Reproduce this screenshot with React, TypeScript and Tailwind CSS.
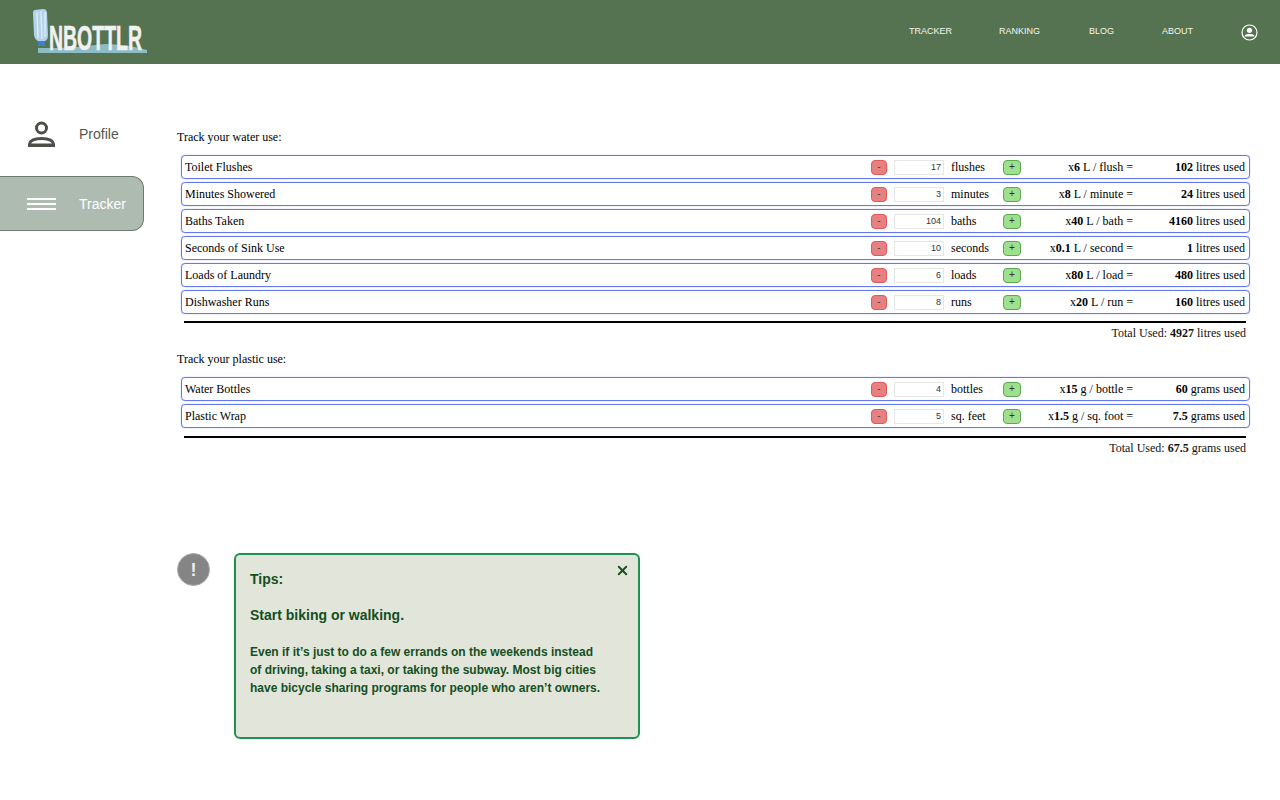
import { X } from "lucide-react"

interface TrackRow {
  label: string
  value: string
  unit: string
  rate: string
  rateUnit: string
  amount: string
  suffix: string
}

const waterRows: TrackRow[] = [
  { label: "Toilet Flushes", value: "17", unit: "flushes", rate: "6", rateUnit: " L / flush =", amount: "102", suffix: " litres used" },
  { label: "Minutes Showered", value: "3", unit: "minutes", rate: "8", rateUnit: " L / minute =", amount: "24", suffix: " litres used" },
  { label: "Baths Taken", value: "104", unit: "baths", rate: "40", rateUnit: " L / bath =", amount: "4160", suffix: " litres used" },
  { label: "Seconds of Sink Use", value: "10", unit: "seconds", rate: "0.1", rateUnit: " L / second =", amount: "1", suffix: " litres used" },
  { label: "Loads of Laundry", value: "6", unit: "loads", rate: "80", rateUnit: " L / load =", amount: "480", suffix: " litres used" },
  { label: "Dishwasher Runs", value: "8", unit: "runs", rate: "20", rateUnit: " L / run =", amount: "160", suffix: " litres used" },
]

const plasticRows: TrackRow[] = [
  { label: "Water Bottles", value: "4", unit: "bottles", rate: "15", rateUnit: " g / bottle =", amount: "60", suffix: " grams used" },
  { label: "Plastic Wrap", value: "5", unit: "sq. feet", rate: "1.5", rateUnit: " g / sq. foot =", amount: "7.5", suffix: " grams used" },
]

function Logo() {
  return (
    <svg width="125" height="50" viewBox="0 0 125 50" className="block overflow-visible">
      <path d="M11 41 L33 41 Q55 40 78 37 Q100 37 120 43 L120 46 L11 46 Z" fill="#8dbcc4" />
      <path d="M8 3 Q6 3 6 6 L7 28 Q8 33 11 34 L18 34 Q21 33 21 28 L20 6 Q20 2 16 2 Z" fill="#b4d2ea" />
      <path d="M10 5 L11 31 M14 4 L15 32 M18 5 L18 30" stroke="#dcebf6" strokeWidth="1.5" fill="none" />
      <rect x="11" y="34" width="7" height="5" fill="#3f7fc4" />
      <text
        x="22"
        y="43"
        textLength="93"
        lengthAdjust="spacingAndGlyphs"
        fontFamily="'Liberation Sans', sans-serif"
        fontWeight="700"
        fontSize="35"
        fill="#f0f1f0"
        stroke="#f0f1f0"
        strokeWidth="0.6"
      >
        NBOTTLR
      </text>
    </svg>
  )
}

function Row({ row }: { row: TrackRow }) {
  return (
    <div className="flex h-6 items-center rounded-[4px] border border-[#6378f2] pl-[3px] pr-1 text-xs text-black shadow-[0_0_1px_#6378f2]">
      <span className="flex-1">{row.label}</span>
      <button className="flex h-[15px] w-4 items-center justify-center rounded-[4px] border border-[#e05a5a] bg-[#e78080] font-['Liberation_Sans',sans-serif] text-[10px] text-[#444]">
        -
      </button>
      <div className="ml-[7px] flex h-[15px] w-[50px] items-center justify-end border border-[#e6e6e6] bg-white pr-[2px] font-['Liberation_Sans',sans-serif] text-[9px] text-[#333]">
        {row.value}
      </div>
      <span className="ml-[7px] w-[52px] whitespace-nowrap">{row.unit}</span>
      <button className="flex h-[15px] w-[18px] items-center justify-center rounded-[4px] border border-[#5aa84f] bg-[#9fe08f] font-['Liberation_Sans',sans-serif] text-[10px] text-[#333]">
        +
      </button>
      <span className="w-[112px] whitespace-pre text-right">
        x<b>{row.rate}</b>
        {row.rateUnit}
      </span>
      <span className="w-[112px] whitespace-pre text-right">
        <b>{row.amount}</b>
        {row.suffix}
      </span>
    </div>
  )
}

interface TrackSectionProps {
  title: string
  rows: TrackRow[]
  total: string
  suffix: string
  lineClass: string
}

function TrackSection({ title, rows, total, suffix, lineClass }: TrackSectionProps) {
  return (
    <section>
      <p className="h-[19px] text-xs leading-[19px] text-black">{title}</p>
      <div className="ml-1 mt-2 flex flex-col gap-[3px]">
        {rows.map(row => (
          <Row key={row.label} row={row} />
        ))}
      </div>
      <div className={`ml-[7px] mr-[4px] h-[2px] bg-black ${lineClass}`} />
      <p className="mr-[4px] mt-[2px] h-[17px] whitespace-pre text-right text-xs leading-[17px] text-[#111]">
        Total Used: <b>{total}</b>
        {suffix}
      </p>
    </section>
  )
}

export default function App() {
  return (
    <div className="flex min-h-[800px] flex-col bg-white font-['Liberation_Serif',serif]">
      {/* Header */}
      <header className="flex h-16 items-center bg-[#557350] pl-[27px] font-['Liberation_Sans',sans-serif] text-[9px] text-[#f4f6f3]">
        <Logo />
        <nav className="ml-auto mr-[22px] flex items-center">
          <span>TRACKER</span>
          <span className="ml-[47px]">RANKING</span>
          <span className="ml-[49px]">BLOG</span>
          <span className="ml-[48px]">ABOUT</span>
          <svg width="17" height="17" viewBox="0 0 17 17" className="ml-[48px]">
            <circle cx="8.5" cy="8.5" r="7.5" fill="none" stroke="white" strokeWidth="1.2" />
            <circle cx="8.5" cy="6.3" r="2.6" fill="white" />
            <path d="M3.5 12.5 Q4 10 7 10 L10 10 Q13 10 13.5 12.5 Z" fill="white" />
          </svg>
        </nav>
      </header>

      <div className="flex flex-1">
        {/* Sidebar */}
        <aside className="w-[177px] shrink-0 pt-[54px] font-['Liberation_Sans',sans-serif] text-sm">
          <div className="flex h-[32px] items-center pl-[27px] text-[#55584f]">
            <svg width="30" height="30" viewBox="0 0 30 30">
              <circle cx="14.5" cy="9" r="5" fill="none" stroke="#4d5048" strokeWidth="3" />
              <path d="M1 28 L1 25 Q2 18 14.5 18 Q27 18 28 25 L28 28 Z M4 24.5 L25 24.5 Q23 21 14.5 21 Q6 21 4 24.5 Z" fill="#4d5048" fillRule="evenodd" />
            </svg>
            <span className="ml-[22px]">Profile</span>
          </div>
          <div className="mt-[26px] flex h-[55px] w-[144px] items-center rounded-r-[12px] border border-l-0 border-[#6f7a70] bg-[#aebbb1] pl-[27px] text-white">
            <div className="flex w-[29px] flex-col gap-[3px]">
              <div className="h-[2px] bg-white" />
              <div className="h-[2px] bg-white" />
              <div className="h-[2px] bg-white" />
            </div>
            <span className="ml-[23px]">Tracker</span>
          </div>
        </aside>

        {/* Main */}
        <main className="w-[1073px] pt-16">
          <TrackSection title="Track your water use:" rows={waterRows} total="4927" suffix=" litres used" lineClass="mt-[7px]" />
          <div className="mt-2">
            <TrackSection title="Track your plastic use:" rows={plasticRows} total="67.5" suffix=" grams used" lineClass="mt-2" />
          </div>

          <div className="mt-24 flex items-start font-['Liberation_Sans',sans-serif] font-bold text-[#14501f]">
            <div className="flex h-[33px] w-[33px] items-center justify-center rounded-full border border-[#aaa] bg-[#858585] text-lg text-[#eee]">
              !
            </div>
            <div className="relative ml-6 h-[186px] w-[406px] rounded-[6px] border-2 border-[#1f9150] bg-[#e1e5da] pl-[14px] pt-[14px]">
              <button className="absolute right-2 top-2 text-[#14501f]">
                <X size={15} strokeWidth={3} />
              </button>
              <p className="text-sm leading-[20px]">Tips:</p>
              <p className="mt-4 text-sm leading-[20px]">Start biking or walking.</p>
              <p className="mt-[18px] text-xs leading-[18px]">
                Even if it’s just to do a few errands on the weekends instead
                <br />
                of driving, taking a taxi, or taking the subway. Most big cities
                <br />
                have bicycle sharing programs for people who aren’t owners.
              </p>
            </div>
          </div>
        </main>
      </div>
    </div>
  )
}
